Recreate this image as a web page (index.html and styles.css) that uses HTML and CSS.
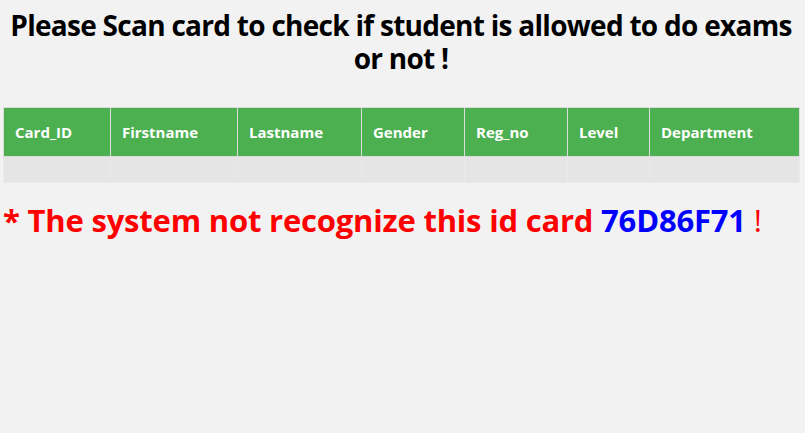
FILE: index.html
```html
<!DOCTYPE html>
<html>
<head>
<meta charset="utf-8">
<link rel="stylesheet" href="styles.css">
</head>
<body>
<h2 class="title">Please Scan card to check if student is allowed to do exams or not !</h2>
<table class="students">
  <colgroup>
    <col class="c1"><col class="c2"><col class="c3"><col class="c4"><col class="c5"><col class="c6"><col class="c7">
  </colgroup>
  <thead>
    <tr>
      <th>Card_ID</th><th>Firstname</th><th>Lastname</th><th>Gender</th><th>Reg_no</th><th>Level</th><th>Department</th>
    </tr>
  </thead>
  <tbody>
    <tr><td></td><td></td><td></td><td></td><td></td><td></td><td></td></tr>
  </tbody>
</table>
<p class="error">* The system not recognize this id card <span class="card-id">76D86F71</span> <span class="bang">!</span></p>
</body>
</html>
```
FILE: styles.css
```css
html, body {
  margin: 0;
  padding: 0;
  background: #f2f2f2;
}
body {
  padding: 0 6px 0 3px;
  font-family: "Open Sans", "Noto Sans", sans-serif;
}
.title {
  margin: 9px 0 0 0;
  text-align: center;
  font-size: 28px;
  font-stretch: 88%;
  letter-spacing: -0.72px;
  line-height: 33px;
  font-weight: 700;
  color: #000;
}
.students {
  margin-top: 32px;
  width: 796px;
  border-collapse: collapse;
  table-layout: fixed;
}
.c1 { width: 107px; }
.c2 { width: 127px; }
.c3 { width: 124px; }
.c4 { width: 103px; }
.c5 { width: 103px; }
.c6 { width: 82px; }
.c7 { width: 150px; }
.students th {
  background: #4caf50;
  color: #fff;
  text-align: left;
  font-size: 15px;
  font-weight: 700;
  height: 48px;
  padding: 0 0 0 11px;
  border: 1px solid #dcdcdc;
}
.students td {
  background: #e5e5e5;
  height: 25px;
  padding: 0;
  border: 1px solid #e9e9e9;
}
.error {
  margin: 17px 0 0 0;
  font-size: 31px;
  font-stretch: 88%;
  letter-spacing: -0.2px;
  line-height: 40px;
  font-weight: 700;
  color: #ff0000;
}
.card-id {
  color: #0000ff;
}
.bang {
  font-weight: 400;
}
```
